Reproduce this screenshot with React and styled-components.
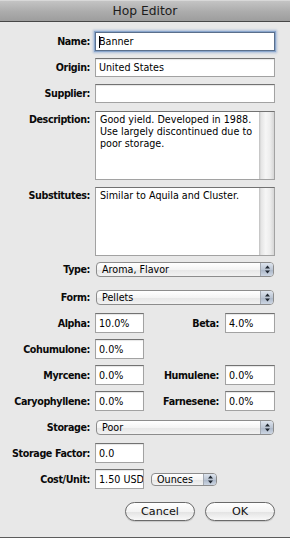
import React from "react";
import styled, { createGlobalStyle, css } from "styled-components";

const GlobalStyle = createGlobalStyle`
  html, body {
    margin: 0;
    padding: 0;
    background: #e8e8e8;
  }
  body {
    font-family: "DejaVu Sans", "Lucida Grande", sans-serif;
  }
`;

const Window = styled.div`
  width: 290px;
  height: 538px;
  box-sizing: border-box;
  background: #e8e8e8;
  border-bottom: 1px solid #5c5c5c;
  display: flex;
  flex-direction: column;
  overflow: hidden;
`;

const TitleBar = styled.div`
  flex: none;
  height: 21px;
  border-bottom: 1px solid #474747;
  background: linear-gradient(#c6c6c6, #acacac 55%, #9d9d9d);
  box-shadow: inset 0 1px 0 #d8d8d8;
  display: flex;
  align-items: center;
  justify-content: center;
  font-size: 12.3px;
  color: #1c1c1c;
`;

const Form = styled.div`
  display: flex;
  flex-direction: column;
  padding: 10px 15px 0 0;
`;

const Row = styled.div`
  display: grid;
  grid-template-columns: 90px 1fr;
  column-gap: 5px;
  align-items: ${(p) => (p.$top ? "start" : "center")};
  margin-top: ${(p) => p.$space || 0}px;
`;

const Label = styled.label`
  text-align: right;
  font-weight: bold;
  font-size: 9.6px;
  letter-spacing: -0.4px;
  color: #0a0a0a;
  white-space: nowrap;
  padding-top: ${(p) => (p.$top ? 3 : 0)}px;
`;

const Field = styled.div`
  box-sizing: border-box;
  height: ${(p) => p.$h || 20}px;
  width: ${(p) => (p.$w ? `${p.$w}px` : "100%")};
  flex: none;
  background: #fff;
  border: 1px solid #a2a2a2;
  border-top-color: #727272;
  box-shadow: inset 0 1px 1px rgba(0, 0, 0, 0.1);
  padding: 0 0 0 3px;
  display: flex;
  align-items: center;
  font-size: 9.6px;
  color: #000;
  white-space: nowrap;
  overflow: hidden;
  ${(p) =>
    p.$focus &&
    css`
      border-color: #5a6f8c;
      box-shadow: 0 0 0 1px #8aa6cc, 0 0 2px 2px rgba(120, 155, 205, 0.55);
      overflow: visible;
    `}
`;

const Caret = styled.span`
  display: inline-block;
  width: 1px;
  height: 12px;
  background: #000;
  margin-right: -1px;
`;

const TextBox = styled.div`
  box-sizing: border-box;
  height: 69px;
  background: #fff;
  border: 1px solid #a2a2a2;
  border-top-color: #727272;
  display: flex;
`;

const TextBody = styled.div`
  flex: 1;
  padding: 2px 3px 2px 4px;
  font-size: 9.6px;
  line-height: 12px;
  color: #000;
`;

const ScrollTrack = styled.div`
  width: 15px;
  flex: none;
  background: linear-gradient(
    to right,
    #bdbdbd,
    #e4e4e4 2px,
    #f6f6f6 45%,
    #ececec 75%,
    #d6d6d6
  );
`;

const Popup = styled.div`
  box-sizing: border-box;
  height: ${(p) => p.$h || 15}px;
  width: ${(p) => (p.$w ? `${p.$w}px` : "auto")};
  margin: 0 ${(p) => (p.$w ? 0 : 1)}px 0 ${(p) => p.$left || 1}px;
  border: 1px solid #8c8c8c;
  border-radius: 4px;
  background: linear-gradient(#ffffff, #f4f4f4 50%, #e6e6e6 52%, #f2f2f2);
  display: flex;
  align-items: center;
  font-size: 9.6px;
  color: #000;
  overflow: hidden;
`;

const PopupText = styled.span`
  flex: 1;
  padding-left: 5px;
  white-space: nowrap;
`;

const Arrows = styled.span`
  width: 12px;
  align-self: stretch;
  background: linear-gradient(#dde4ee, #bcc6d4 50%, #aab6c7 52%, #cdd6e3);
  border-left: 1px solid #a3a9b2;
  display: flex;
  align-items: center;
  justify-content: center;
`;

const Pair = styled.div`
  display: flex;
  align-items: center;
`;

const SubLabel = styled(Label)`
  flex: 1;
  padding-right: 6px;
`;

const Actions = styled.div`
  display: flex;
  justify-content: flex-end;
  gap: 10px;
  margin-top: 13px;
`;

const Button = styled.button`
  width: 70px;
  height: 19px;
  padding: 0;
  border-radius: 10px;
  border: 1px solid #6a6a6a;
  background: linear-gradient(#ffffff, #f3f3f3 50%, #e3e3e3 52%, #f8f8f8);
  box-shadow: 0 1px 1px rgba(0, 0, 0, 0.15);
  font-family: inherit;
  font-size: 11.2px;
  color: #111;
`;

const Stepper = () => (
  <Arrows>
    <svg width="5" height="9" viewBox="0 0 5 9">
      <path d="M2.5 0.5 L5 3.5 L0 3.5 Z" fill="#1e2630" />
      <path d="M0 5.5 L5 5.5 L2.5 8.5 Z" fill="#1e2630" />
    </svg>
  </Arrows>
);

const Select = ({ value, ...rest }) => (
  <Popup {...rest}>
    <PopupText>{value}</PopupText>
    <Stepper />
  </Popup>
);

export default function App() {
  return (
    <>
      <GlobalStyle />
      <Window>
        <TitleBar>Hop Editor</TitleBar>
        <Form>
          <Row>
            <Label>Name:</Label>
            <Field $focus $h={19}>
              <Caret />
              Banner
            </Field>
          </Row>
          <Row $space={7}>
            <Label>Origin:</Label>
            <Field $h={19}>United States</Field>
          </Row>
          <Row $space={7}>
            <Label>Supplier:</Label>
            <Field $h={19} />
          </Row>
          <Row $top $space={8}>
            <Label $top>Description:</Label>
            <TextBox>
              <TextBody>
                Good yield. Developed in 1988.
                <br />
                Use largely discontinued due to
                <br />
                poor storage.
              </TextBody>
              <ScrollTrack />
            </TextBox>
          </Row>
          <Row $top $space={7}>
            <Label $top>Substitutes:</Label>
            <TextBox>
              <TextBody>Similar to Aquila and Cluster.</TextBody>
              <ScrollTrack />
            </TextBox>
          </Row>
          <Row $space={6}>
            <Label>Type:</Label>
            <Select value="Aroma, Flavor" />
          </Row>
          <Row $space={13}>
            <Label>Form:</Label>
            <Select value="Pellets" />
          </Row>
          <Row $space={8}>
            <Label>Alpha:</Label>
            <Pair>
              <Field $w={49}>10.0%</Field>
              <SubLabel>Beta:</SubLabel>
              <Field $w={50}>4.0%</Field>
            </Pair>
          </Row>
          <Row $space={6}>
            <Label>Cohumulone:</Label>
            <Pair>
              <Field $w={49}>0.0%</Field>
            </Pair>
          </Row>
          <Row $space={6}>
            <Label>Myrcene:</Label>
            <Pair>
              <Field $w={49}>0.0%</Field>
              <SubLabel>Humulene:</SubLabel>
              <Field $w={50}>0.0%</Field>
            </Pair>
          </Row>
          <Row $space={6}>
            <Label>Caryophyllene:</Label>
            <Pair>
              <Field $w={49}>0.0%</Field>
              <SubLabel>Farnesene:</SubLabel>
              <Field $w={50}>0.0%</Field>
            </Pair>
          </Row>
          <Row $space={9}>
            <Label>Storage:</Label>
            <Select value="Poor" />
          </Row>
          <Row $space={8}>
            <Label>Storage Factor:</Label>
            <Pair>
              <Field $w={49}>0.0</Field>
            </Pair>
          </Row>
          <Row $space={6}>
            <Label>Cost/Unit:</Label>
            <Pair>
              <Field $w={49}>1.50 USD</Field>
              <Select value="Ounces" $w={66} $h={13} $left={7} />
            </Pair>
          </Row>
          <Actions>
            <Button>Cancel</Button>
            <Button>OK</Button>
          </Actions>
        </Form>
      </Window>
    </>
  );
}
